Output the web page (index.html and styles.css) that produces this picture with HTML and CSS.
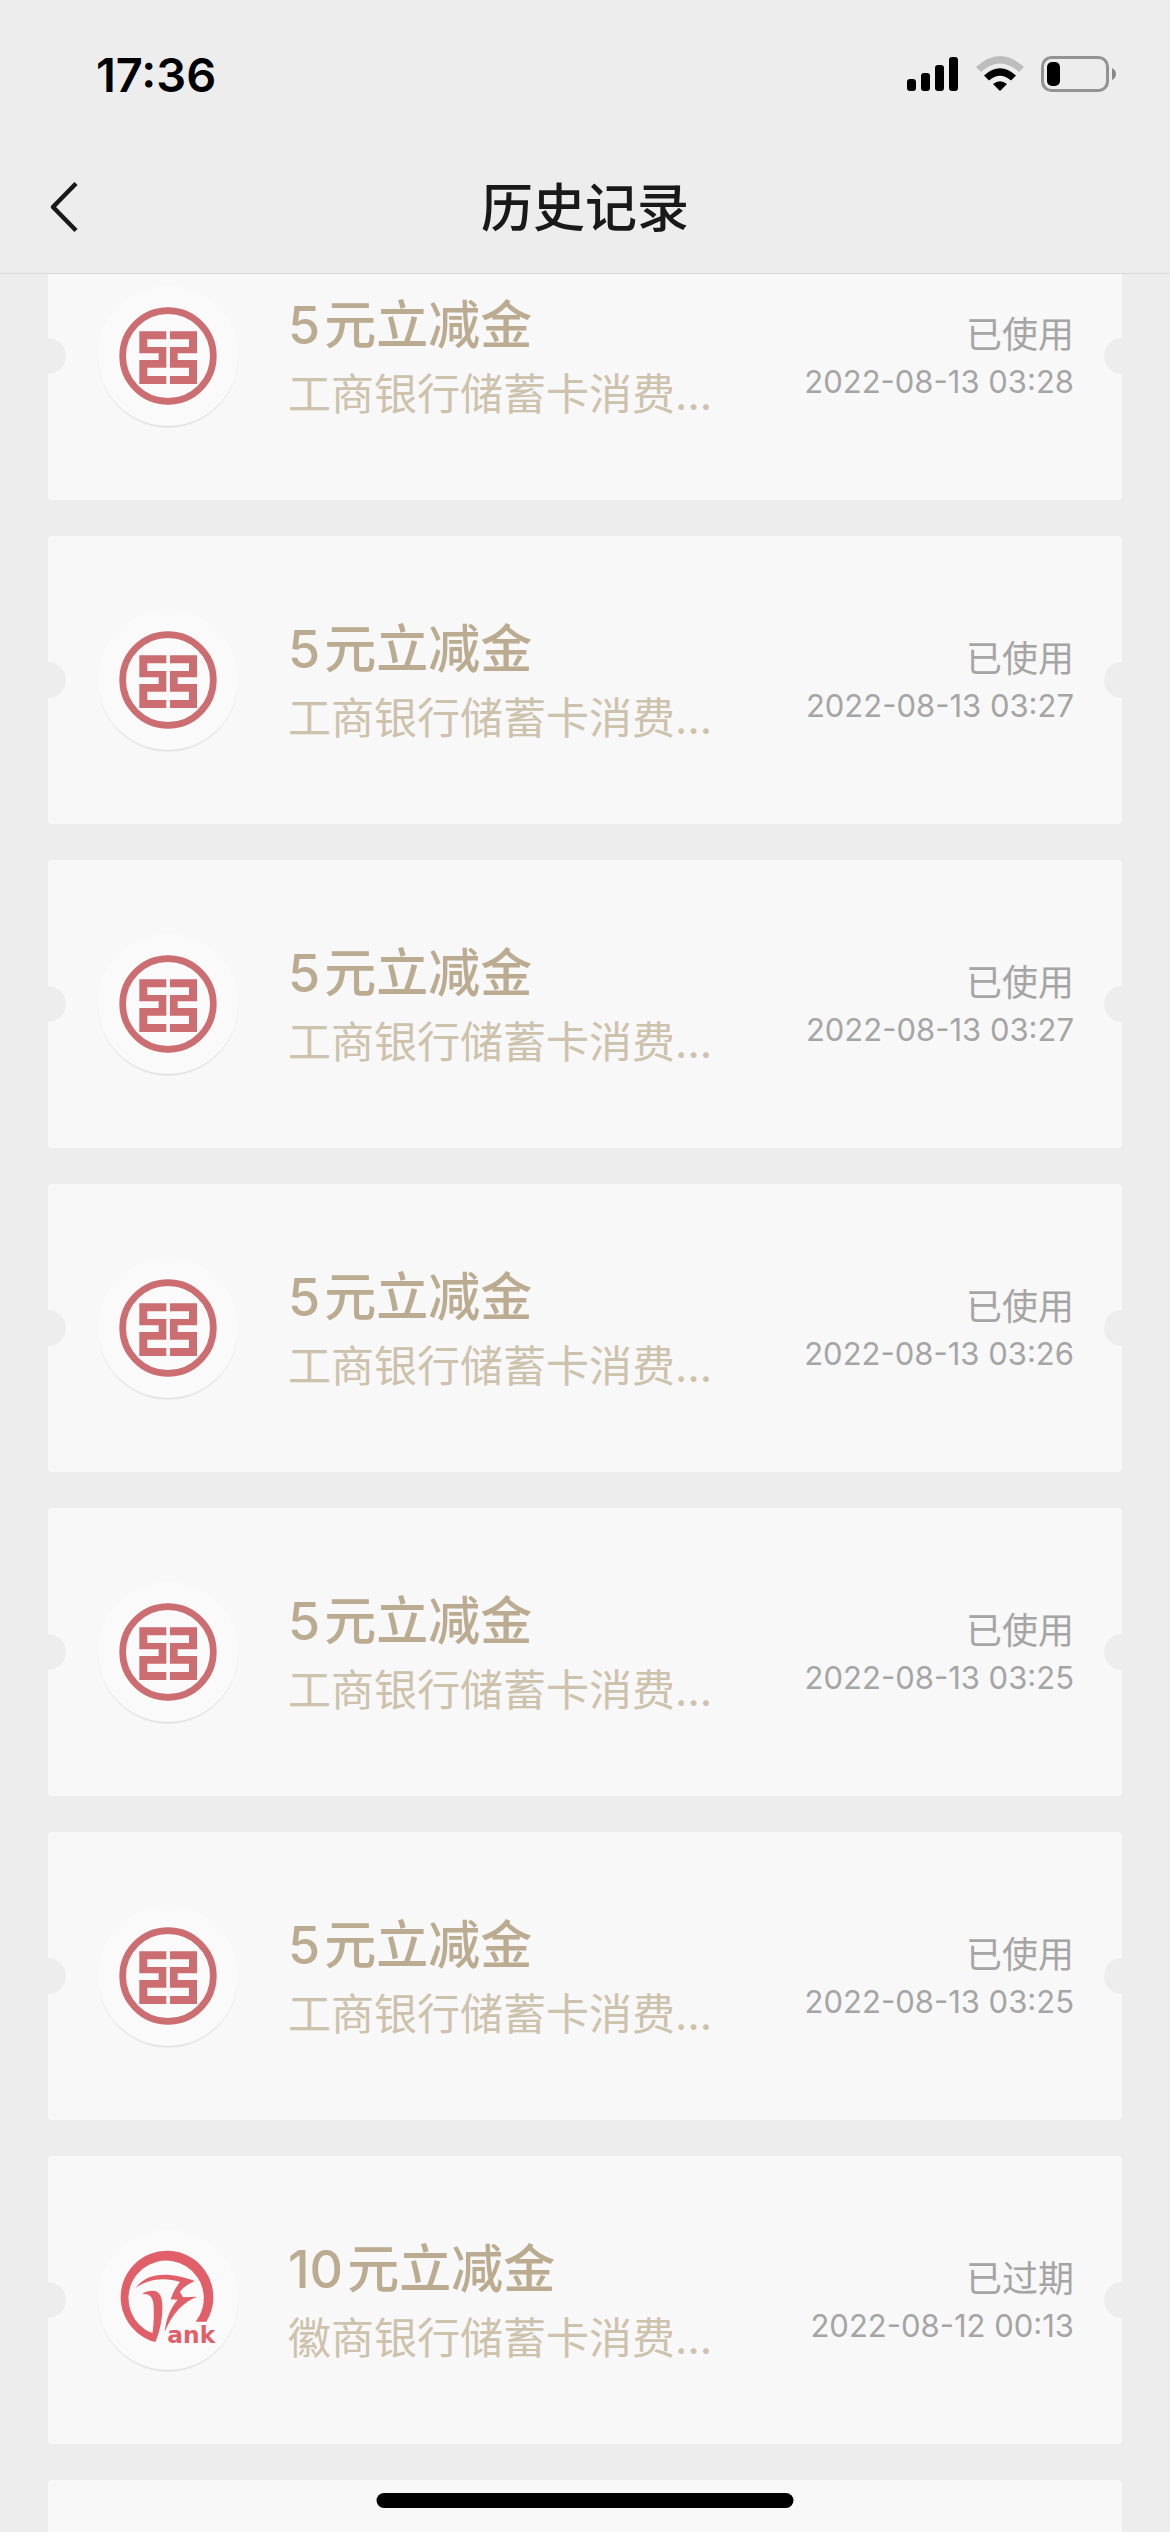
FILE: index.html
```html
<!DOCTYPE html>
<html lang="zh-CN">
<head>
    <meta charset="UTF-8">
    <meta name="viewport" content="width=device-width, initial-scale=1">
    <title>历史记录</title>
    <link rel="stylesheet" href="styles.css">
</head>
<body>
    <!-- Shared logo -->
    <svg class="defs" width="0" height="0" aria-hidden="true">
        <symbol id="icbc" viewBox="2 2 140 140">
            <g transform="translate(-6 -8) scale(.33333)" fill="#cc6d71">
                <circle cx="234" cy="240" r="136" fill="none" stroke="#cc6d71" stroke-width="20"/>
                <path d="M148 166H229V190H172V213H229V275H172V300H229V324H148V252H206V232H148Z"/>
                <path d="M321 166H240V190H297V213H240V275H297V300H240V324H321V252H263V232H321Z"/>
            </g>
        </symbol>
    </svg>

    <div class="screen">
        <header class="header">
            <div class="status-bar">
                <span class="time">17:36</span>
                <div class="status-icons">
                    <!-- Signal -->
                    <svg width="52" height="36" viewBox="0 0 52 36">
                        <rect x="0" y="23" width="9" height="12" rx="3"/>
                        <rect x="14" y="17" width="9" height="18" rx="3"/>
                        <rect x="28" y="9" width="9" height="26" rx="3"/>
                        <rect x="42" y="1" width="9" height="34" rx="3"/>
                    </svg>
                    <!-- Wifi -->
                    <svg width="50" height="36" viewBox="0 0 50 36">
                        <path d="M1 11Q25 -11 49 11L44 16Q25 -1 6 16Z" fill="#bdbdbd"/>
                        <path d="M9 19.500Q25 5 41 19.500L36 24.500Q25 15 14 24.500Z"/>
                        <path d="M18 28Q25 22.500 32 28L25 35Z"/>
                    </svg>
                    <!-- Battery -->
                    <svg width="76" height="36" viewBox="0 0 76 36">
                        <rect x="1.500" y="1.500" width="65" height="33" rx="9" fill="none" stroke="#939393" stroke-width="3"/>
                        <rect x="6" y="6" width="13" height="24" rx="5"/>
                        <path d="M71 12Q75 14 75 18T71 24Z" fill="#888"/>
                    </svg>
                </div>
            </div>
            <nav class="nav">
                <button class="back" aria-label="返回">
                    <svg width="30" height="52" viewBox="0 0 30 52">
                        <path d="M27 2.500L4 26L27 49.500" fill="none" stroke="#191919" stroke-width="4.500" stroke-linejoin="round"/>
                    </svg>
                </button>
                <h1 class="page-title">历史记录</h1>
            </nav>
        </header>

        <main class="content">
            <ul class="list">
                <li class="card">
                    <svg class="logo"><use href="#icbc"/></svg>
                    <div class="info">
                        <h2 class="name"><span class="amount">5</span>元立减金</h2>
                        <p class="desc">工商银行储蓄卡消费…</p>
                    </div>
                    <div class="state">
                        <p class="status">已使用</p>
                        <time class="date">2022-08-13 03:28</time>
                    </div>
                </li>
                <li class="card">
                    <svg class="logo"><use href="#icbc"/></svg>
                    <div class="info">
                        <h2 class="name"><span class="amount">5</span>元立减金</h2>
                        <p class="desc">工商银行储蓄卡消费…</p>
                    </div>
                    <div class="state">
                        <p class="status">已使用</p>
                        <time class="date">2022-08-13 03:27</time>
                    </div>
                </li>
                <li class="card">
                    <svg class="logo"><use href="#icbc"/></svg>
                    <div class="info">
                        <h2 class="name"><span class="amount">5</span>元立减金</h2>
                        <p class="desc">工商银行储蓄卡消费…</p>
                    </div>
                    <div class="state">
                        <p class="status">已使用</p>
                        <time class="date">2022-08-13 03:27</time>
                    </div>
                </li>
                <li class="card">
                    <svg class="logo"><use href="#icbc"/></svg>
                    <div class="info">
                        <h2 class="name"><span class="amount">5</span>元立减金</h2>
                        <p class="desc">工商银行储蓄卡消费…</p>
                    </div>
                    <div class="state">
                        <p class="status">已使用</p>
                        <time class="date">2022-08-13 03:26</time>
                    </div>
                </li>
                <li class="card">
                    <svg class="logo"><use href="#icbc"/></svg>
                    <div class="info">
                        <h2 class="name"><span class="amount">5</span>元立减金</h2>
                        <p class="desc">工商银行储蓄卡消费…</p>
                    </div>
                    <div class="state">
                        <p class="status">已使用</p>
                        <time class="date">2022-08-13 03:25</time>
                    </div>
                </li>
                <li class="card">
                    <svg class="logo"><use href="#icbc"/></svg>
                    <div class="info">
                        <h2 class="name"><span class="amount">5</span>元立减金</h2>
                        <p class="desc">工商银行储蓄卡消费…</p>
                    </div>
                    <div class="state">
                        <p class="status">已使用</p>
                        <time class="date">2022-08-13 03:25</time>
                    </div>
                </li>
                <li class="card">
                    <svg class="logo" viewBox="2 2 140 140">
                        <g transform="translate(-6 -18) scale(.33333)" fill="#e05f69">
                            <path d="M349 335A139 139 0 1 0 196 396C208 370 217 330 217 295C218 262 210 242 188 242C174 242 162 246 157 252C180 250 190 262 191 290C192 320 191 350 187 370A113 113 0 1 1 317 335Z"/>
                            <path d="M137 234C158 204 190 193 228 194C262 196 292 204 315 213C296 222 279 231 270 246C274 254 277 258 279 262L322 260C278 276 247 312 224 365C228 328 241 294 263 269L242 268C248 250 257 232 270 216C224 201 172 207 137 234Z"/>
                            <text class="bank-text" x="232" y="398">ank</text>
                        </g>
                    </svg>
                    <div class="info">
                        <h2 class="name"><span class="amount">10</span>元立减金</h2>
                        <p class="desc">徽商银行储蓄卡消费…</p>
                    </div>
                    <div class="state">
                        <p class="status">已过期</p>
                        <time class="date">2022-08-12 00:13</time>
                    </div>
                </li>
                <li class="card"></li>
            </ul>
        </main>

        <div class="home-indicator"></div>
    </div>
</body>
</html>
```

FILE: styles.css
```css
* {
    box-sizing: border-box;
    margin: 0;
    padding: 0;
}

body {
    background-color: #ededed;
    font-family: Inter, "Noto Sans CJK SC", sans-serif;
}

.defs {
    position: absolute;
}

.screen {
    position: relative;
    display: flex;
    flex-direction: column;
    height: 100vh;
    overflow: hidden;
}

/* Header */
.header {
    flex: none;
    background-color: #ededed;
    border-bottom: 1px solid #d9d9d9;
}

.status-bar {
    display: flex;
    justify-content: space-between;
    align-items: center;
    height: 141px;
    padding: 7px 53px 0 96px;
}

.time {
    font-size: 47px;
    font-weight: 600;
    color: #000;
}

.status-icons {
    display: flex;
    align-items: center;
    gap: 16px;
}

.nav {
    display: grid;
    grid-template-columns: 132px 1fr 132px;
    align-items: center;
    height: 132px;
}

.back {
    display: flex;
    align-items: center;
    height: 132px;
    padding-left: 49px;
    border: none;
    background: none;
    cursor: pointer;
}

.page-title {
    padding-top: 4px;
    font-size: 52px;
    font-weight: 500;
    line-height: 72px;
    text-align: center;
    color: #191919;
}

/* List, scrolled part of the way into the first card */
.content {
    flex: 1;
    min-height: 0;
    overflow: hidden;
}

.list {
    display: flex;
    flex-direction: column;
    gap: 36px;
    margin-top: -62px;
    padding: 0 48px;
    list-style: none;
}

.card {
    position: relative;
    display: flex;
    align-items: center;
    gap: 50px;
    min-height: 288px;
    padding: 0 48px 0 50px;
    border-radius: 4px;
    background-color: #f8f8f8;
    overflow: hidden;
}

/* Ticket notches */
.card::before,
.card::after {
    content: "";
    position: absolute;
    top: 126px;
    width: 36px;
    height: 36px;
    border-radius: 50%;
    background-color: #ededed;
}

.card::before {
    left: -18px;
}

.card::after {
    right: -18px;
}

.logo {
    flex: none;
    width: 140px;
    height: 140px;
    border-radius: 50%;
    background-color: #fafafa;
    box-shadow: 0 2px 2px -1px rgba(0, 0, 0, 0.15);
}

.bank-text {
    font-family: "DejaVu Sans", sans-serif;
    font-size: 70px;
    font-weight: 700;
}

.info {
    flex: 1;
    min-width: 0;
    white-space: nowrap;
}

.name {
    font-size: 52px;
    font-weight: 500;
    line-height: 76px;
    color: #bbac91;
}

.amount {
    margin-right: 4px;
}

.desc {
    font-size: 43px;
    font-weight: 400;
    line-height: 60px;
    color: #cdc2ac;
}

.state {
    text-align: right;
    color: #a5a5a5;
}

.status {
    font-size: 36px;
    line-height: 52px;
}

.date {
    display: block;
    font-size: 31px;
    line-height: 42px;
}

.home-indicator {
    position: absolute;
    bottom: 24px;
    left: 50%;
    width: 417px;
    height: 15px;
    border-radius: 8px;
    background-color: #000;
    transform: translateX(-50%);
}
```
